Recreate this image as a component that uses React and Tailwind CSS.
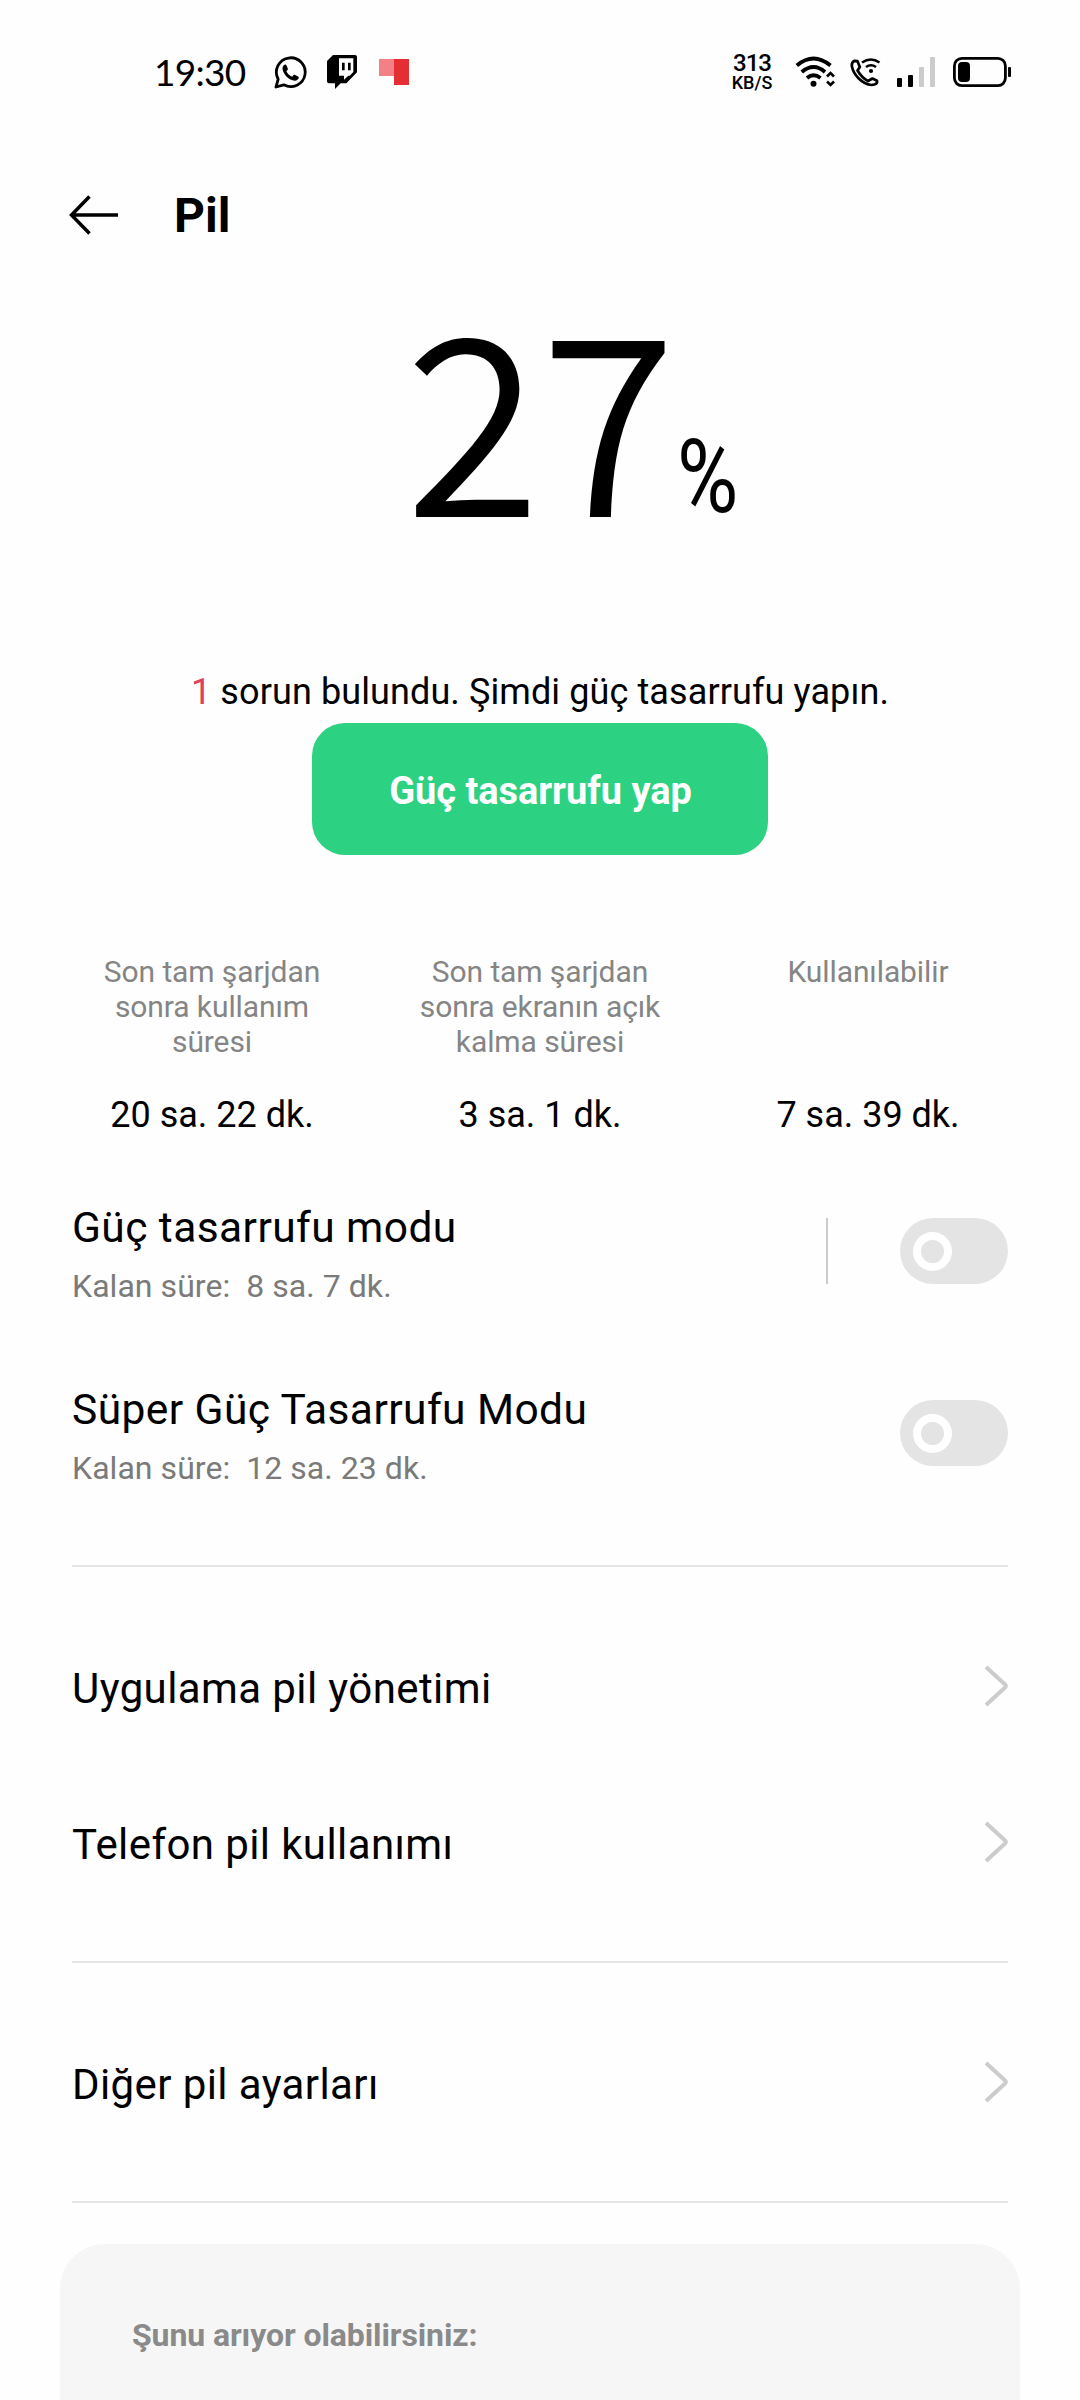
import { useState } from "react"

function WhatsAppIcon() {
  return (
    <svg width="33" height="33" viewBox="0 0 33 33" fill="none">
      <path d="M2 31 L4.2 23.2 A14.4 14.4 0 1 1 9.8 28.8 Z" stroke="black" strokeWidth="2.8" strokeLinejoin="round" />
      <path d="M11.2 8.6c-1.5.3-2.9 2-2.7 4.200.4 5.400 6.600 11.800 12.200 11.900 2 .1 3.700-1.300 4-3 .1-.7-.1-1-.7-1.300l-3.300-1.600c-.5-.2-.9-.1-1.200.3l-1.300 1.600c-2.700-1-4.700-3-5.800-5.500l1.300-1.500c.3-.4.3-.8.1-1.200l-1.400-3.300c-.2-.5-.6-.7-1.200-.6z" fill="black" />
    </svg>
  )
}

function TwitchIcon() {
  return (
    <svg width="30" height="34" viewBox="0 0 90 102">
      <path fillRule="evenodd" d="M18 0H84Q90 0 90 6V52L58 85H41L24 102V85H6Q0 85 0 79V18ZM36 10V62H51V74L64 62H68L79 51V10Z" />
      <path d="M45 23h8v23h-8zM63 23h8v23h-8z" />
    </svg>
  )
}

function WifiIcon() {
  return (
    <svg width="41" height="32" viewBox="0 0 41 32" fill="none" stroke="black">
      <path d="M1.800 9.500Q18.500-4.500 35.500 9.500" strokeWidth="3.800" />
      <path d="M6.800 16Q18.500 6 30 16" strokeWidth="3.800" />
      <path d="M12 22Q18.500 16.500 25.500 22" strokeWidth="3.800" />
      <circle cx="18.500" cy="27.800" r="3" fill="black" stroke="none" />
      <path d="M32 20.500l3.500-3.500 3.500 3.500M32 25.500l3.500 3.500 3.500-3.500" strokeWidth="2.600" />
    </svg>
  )
}

function WifiCallIcon() {
  return (
    <svg width="31" height="29" viewBox="0 0 31 29" fill="none" stroke="black">
      <path d="M7.500 3.200L4.500 2.800Q1.500 4 1.800 8C3.500 17 12 26 21.500 27Q25.500 27 27 24.800V22.800L22.500 20.500L18 23Q12 20 7.500 12.500L9.800 9Z" strokeWidth="2.700" strokeLinejoin="round" />
      <path d="M12 4.500Q21 -1.500 29.500 4.500M16 9Q21 5.500 26 9" strokeWidth="2.600" />
      <circle cx="21" cy="13" r="2.100" fill="black" stroke="none" />
    </svg>
  )
}

function SignalIcon() {
  return (
    <svg width="38" height="30" viewBox="0 0 38 30">
      <rect x="0" y="21" width="5" height="9" rx="1" />
      <rect x="11" y="18" width="5" height="12" rx="1" />
      <rect x="22" y="10" width="5" height="20" rx="1" fill="#cccccc" />
      <rect x="33" y="0" width="5" height="30" rx="1" fill="#cccccc" />
    </svg>
  )
}

function BatteryIcon() {
  return (
    <svg width="58" height="30" viewBox="0 0 58 30">
      <rect x="1.400" y="1.400" width="51" height="27.200" rx="7.500" fill="none" stroke="black" strokeWidth="2.800" />
      <rect x="5" y="5" width="12" height="20" rx="4" />
      <rect x="55" y="10" width="3" height="10" rx="1" />
    </svg>
  )
}

function Switch({ on, onChange }) {
  return (
    <button type="button" role="switch" aria-checked={on} onClick={onChange}
      className={`flex h-[66px] w-[108px] items-center rounded-full px-[13px] ${on ? "justify-end bg-[#2cd181]" : "bg-[#e4e4e4]"}`}>
      <span className="h-[39px] w-[39px] rounded-full border-8 border-white" />
    </button>
  )
}

function ModeRow({ title, remaining, divided }) {
  const [on, setOn] = useState(false)
  return (
    <div className="flex h-[182px] items-center justify-between">
      <div className="pt-[6px]">
        <div className="text-[42.500px] leading-[50px] tracking-[0.42px]">{title}</div>
        <div className="mt-[13px] whitespace-pre text-[32px] leading-10 tracking-[0.05px] text-[#7a7a7a]">{"Kalan süre:  " + remaining}</div>
      </div>
      <div className="flex items-center">
        {divided && <div className="mr-[72px] h-[66px] w-0.5 bg-[#cccccc]" />}
        <Switch on={on} onChange={() => setOn(!on)} />
      </div>
    </div>
  )
}

function LinkRow({ title }) {
  return (
    <div className="flex h-[156px] items-center justify-between">
      <span className="pt-[5px] text-[42px] leading-[50px] tracking-[0.4px]">{title}</span>
      <svg width="24" height="42" viewBox="0 0 24 42" fill="none">
        <path d="M2 2L21 19.500Q22.500 21 21 22.500L2 40" stroke="#cccccc" strokeWidth="4" />
      </svg>
    </div>
  )
}

const stats = [
  { label: ["Son tam şarjdan", "sonra kullanım", "süresi"], value: "20 sa. 22 dk." },
  { label: ["Son tam şarjdan", "sonra ekranın açık", "kalma süresi"], value: "3 sa. 1 dk." },
  { label: ["Kullanılabilir"], value: "7 sa. 39 dk." },
]

export default function App() {
  return (
    <div className="flex h-[2400px] w-[1080px] flex-col overflow-hidden bg-[#fefefe] font-['Roboto',sans-serif] text-black">
      <div className="flex h-[144px] shrink-0 items-center pl-[154px] pr-[69px]">
        <span className="w-[120px] pb-px font-['Lato',sans-serif] text-[37px] tracking-[-0.7px]">19:30</span>
        <WhatsAppIcon />
        <div className="ml-5"><TwitchIcon /></div>
        <div className="ml-[22px] flex h-[26px] w-[30px]">
          <div className="h-[17px] w-[15px] bg-[#f28086]" />
          <div className="h-[26px] w-[15px] bg-[#e52d34]" />
        </div>
        <div className="ml-auto flex w-[42px] flex-col items-center font-medium">
          <span className="text-[24px] leading-[22px] tracking-[-1px]">313</span>
          <span className="text-[18px] leading-[18px]">KB/S</span>
        </div>
        <div className="ml-[22px]"><WifiIcon /></div>
        <div className="ml-[14px]"><WifiCallIcon /></div>
        <div className="ml-4"><SignalIcon /></div>
        <div className="ml-[18px]"><BatteryIcon /></div>
      </div>

      <div className="flex h-[142px] shrink-0 items-center gap-[56px] pl-[69px]">
        <svg width="49" height="40" viewBox="0 0 49 40" fill="none" stroke="black" strokeWidth="3.500">
          <path d="M20.500 1.500L2.500 20L20.500 38.500M2.500 20H49" />
        </svg>
        <h1 className="pt-px text-[48px] font-bold leading-[56px]">Pil</h1>
      </div>

      <div className="flex h-[384px] shrink-0 items-start pl-[405px] pt-[3px]">
        <span className="w-[272px] font-['Noto_Sans_CJK_JP',sans-serif] text-[247px] font-[350] leading-[240px]">27</span>
        <span className="mt-[128px] origin-left scale-x-82 text-[102px] leading-[120px]">%</span>
      </div>

      <div className="flex shrink-0 flex-col items-center">
        <p className="h-[53px] pt-px text-[36px] leading-[42px] tracking-[0.1px]"><span className="text-[#e0415a]">1</span> sorun bulundu. Şimdi güç tasarrufu yapın.</p>
        <button type="button" className="h-[132px] w-[456px] rounded-[33px] bg-[#2cd181] pl-px pt-1 text-[38px] font-bold tracking-[-0.05px] text-white">Güç tasarrufu yap</button>
      </div>

      <div className="mx-12 mt-[99px] grid shrink-0 grid-cols-3 text-center">
        {stats.map((s) => (
          <div key={s.value} className="flex h-[190px] flex-col justify-between pb-2">
            <div className="text-[30px] leading-[35px] tracking-[-0.1px] text-[#858585]">
              {s.label.map((line) => <div key={line}>{line}</div>)}
            </div>
            <div className="text-[36px] leading-[42px]">{s.value}</div>
          </div>
        ))}
      </div>

      <div className="mt-[16px] shrink-0 px-[72px]">
        <ModeRow title="Güç tasarrufu modu" remaining="8 sa. 7 dk." divided />
        <ModeRow title="Süper Güç Tasarrufu Modu" remaining="12 sa. 23 dk." />
        <div className="mt-[41px] border-t-2 border-[#e5e5e5] py-[41px]">
          <LinkRow title="Uygulama pil yönetimi" />
          <LinkRow title="Telefon pil kullanımı" />
        </div>
        <div className="border-y-2 border-[#e5e5e5] py-[41px]">
          <LinkRow title="Diğer pil ayarları" />
        </div>
      </div>

      <div className="mx-[60px] mt-[41px] grow rounded-t-[45px] bg-[#f6f6f6] px-[72px] pt-[71px] text-[32px] font-bold leading-10 tracking-[-0.1px] text-[#8a8a8a]">
        Şunu arıyor olabilirsiniz:
      </div>
    </div>
  )
}
